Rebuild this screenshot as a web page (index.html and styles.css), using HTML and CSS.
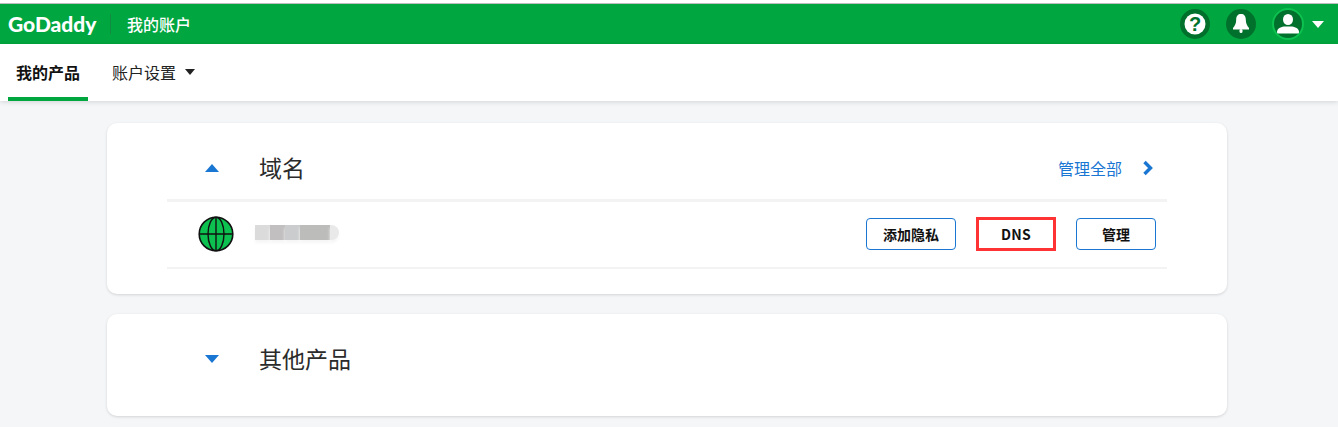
FILE: index.html
```html
<!DOCTYPE html>
<html lang="zh-CN">
<head>
  <meta charset="UTF-8">
  <title>我的账户</title>
  <link rel="stylesheet" href="styles.css">
</head>
<body>
  <header class="topbar">
    <div class="brand">
      <span class="logo">GoDaddy</span>
      <span class="brand-title">我的账户</span>
    </div>
    <div class="top-icons">
      <span class="round-icon">
        <svg width="22" height="22" viewBox="0 0 22 22"><circle cx="11" cy="11" r="10.500" fill="#fff"/><text x="11" y="17.500" class="help-mark">?</text></svg>
      </span>
      <span class="round-icon">
        <svg width="20" height="24" viewBox="0 0 20 24"><path d="M10 2C7 2 5.200 4 5.200 7.500c0 4-1.200 6-3.200 8.500v1.500h16V16c-2-2.500-3.200-4.500-3.200-8.500C14.800 4 13 2 10 2z" fill="#fff"/><rect x="8.500" y="17" width="3" height="4" rx="1.500" fill="#fff"/></svg>
      </span>
      <span class="round-icon avatar">
        <svg width="24" height="20" viewBox="0 0 24 20"><ellipse cx="12" cy="5.500" rx="5" ry="5.500" fill="#fff"/><path d="M1 18c0-3 3-5 7-5.500h8c4 .5 7 2.500 7 5.500 0 1-.5 1.500-1.500 1.500h-19C1.500 19.500 1 19 1 18z" fill="#fff"/></svg>
      </span>
      <span class="caret-white"></span>
    </div>
  </header>

  <nav class="subnav">
    <a class="tab active">我的产品</a>
    <a class="tab">账户设置<span class="caret-dark"></span></a>
  </nav>

  <main class="content">
    <section class="card">
      <div class="card-head">
        <span class="arrow-up"></span>
        <h2 class="card-title">域名</h2>
        <a class="manage-all">管理全部
          <svg width="12" height="16" viewBox="0 0 12 16"><path d="M2.500 2 8.500 8 2.500 14" fill="none" stroke="#1976d2" stroke-width="3.400"/></svg>
        </a>
      </div>
      <div class="domain-row">
        <svg class="globe" width="36" height="36" viewBox="0 0 36 36">
          <circle cx="18" cy="18" r="16.800" fill="#0cc14f" stroke="#111" stroke-width="1.600"/>
          <ellipse cx="18" cy="18" rx="8" ry="16.800" fill="none" stroke="#111" stroke-width="1.400"/>
          <path d="M18 1v34M1 18h34" stroke="#111" stroke-width="1.400"/>
        </svg>
        <div class="blurred">
          <span class="blur-a"></span><span class="blur-b"></span><span class="blur-c"></span><span class="blur-d"></span><span class="blur-e"></span>
        </div>
        <div class="actions">
          <button class="btn">添加隐私</button>
          <button class="btn btn-marked">DNS</button>
          <button class="btn btn-short">管理</button>
        </div>
      </div>
    </section>

    <section class="card card-other">
      <div class="card-head">
        <span class="arrow-down"></span>
        <h2 class="card-title">其他产品</h2>
      </div>
    </section>
  </main>
</body>
</html>
```

FILE: styles.css
```css
* {
  box-sizing: border-box;
}
html, body {
  height: 100%;
}
body {
  margin: 0;
  overflow: hidden;
  background: #f5f6f8;
  font-family: "Noto Sans CJK SC", "Liberation Sans", sans-serif;
  color: #111;
}

.topbar {
  height: 44px;
  padding-top: 1px;
  border-top: 3px solid #fff;
  background: #00a63f;
  display: flex;
  align-items: center;
  justify-content: space-between;
  box-shadow: inset 0 1px 0 #bdbdbd;
}
.brand {
  display: flex;
  align-items: center;
  padding-left: 8px;
}
.logo {
  width: 103px;
  height: 20px;
  border-right: 1px solid #118a42;
  color: #fff;
  font-family: "Lato", sans-serif;
  font-weight: 900;
  font-size: 21px;
  line-height: 20px;
}
.brand-title {
  margin-left: 16px;
  color: #fff;
  font-size: 16px;
  font-weight: 500;
  line-height: 22px;
}
.top-icons {
  display: flex;
  align-items: center;
  padding-right: 14px;
}
.round-icon {
  width: 30px;
  height: 30px;
  margin-right: 16px;
  border-radius: 50%;
  background: #00712c;
  display: flex;
  align-items: center;
  justify-content: center;
}
.help-mark {
  fill: #00712c;
  font-family: "Liberation Sans", sans-serif;
  font-size: 20px;
  font-weight: 700;
  text-anchor: middle;
}
.avatar {
  width: 32px;
  height: 32px;
  margin-right: 8px;
  border: 2px solid #0cc14f;
}
.caret-white {
  width: 0;
  height: 0;
  border-left: 6px solid transparent;
  border-right: 6px solid transparent;
  border-top: 7px solid #fff;
}

.subnav {
  height: 57px;
  padding-left: 8px;
  background: #fff;
  display: flex;
  box-shadow: 0 1px 5px rgba(0, 0, 0, 0.14);
}
.tab {
  height: 57px;
  padding: 2px 8px 4px;
  margin-right: 16px;
  display: flex;
  align-items: center;
  font-size: 16px;
  color: #222;
}
.tab.active {
  width: 80px;
  font-weight: 700;
  color: #111;
  border-bottom: 4px solid #00a63f;
  padding-bottom: 0;
}
.caret-dark {
  margin-left: 9px;
  border-left: 5.500px solid transparent;
  border-right: 5.500px solid transparent;
  border-top: 6px solid #222;
}

.content {
  width: 1120px;
  margin-left: 107px;
  padding-top: 22px;
}
.card {
  height: 171px;
  padding: 0 60px;
  background: #fff;
  border-radius: 10px;
  box-shadow: 0 1px 3px rgba(0, 0, 0, 0.14);
}
.card-other {
  height: 102px;
  margin-top: 20px;
}
.card-head {
  height: 79px;
  padding-top: 14px;
  display: flex;
  align-items: center;
  border-bottom: 3px solid #f3f3f3;
}
.card-other .card-head {
  border-bottom: 0;
  padding-top: 0;
  height: 90px;
}
.arrow-up, .arrow-down {
  width: 0;
  height: 0;
  margin-left: 38px;
  border-left: 7px solid transparent;
  border-right: 7px solid transparent;
}
.arrow-up {
  border-bottom: 8px solid #1976d2;
}
.arrow-down {
  border-top: 8px solid #1976d2;
}
.card-title {
  margin: 0 0 2px 40px;
  font-size: 23px;
  font-weight: 400;
  color: #2b2b2b;
}
.manage-all {
  margin-left: auto;
  margin-right: 13px;
  display: flex;
  align-items: center;
  gap: 20px;
  color: #1976d2;
  font-size: 16px;
}
.domain-row {
  height: 67px;
  display: flex;
  align-items: center;
  border-bottom: 2px solid #f3f3f3;
}
.globe {
  margin-left: 31px;
  margin-bottom: 1px;
}
.blurred {
  margin-left: 21px;
  margin-bottom: 4px;
  display: flex;
  height: 15px;
}
.blurred span {
  height: 15px;
  box-shadow: 0 3px 3px #f6f6f6;
}
.blur-a {
  width: 15px;
  background: #dbdbdb;
}
.blur-b {
  width: 15px;
  background: #c1bfbf;
}
.blur-c {
  width: 15px;
  background: #cbcccd;
}
.blur-d {
  width: 30px;
  background: #bcbcba;
}
.blur-e {
  width: 9px;
  background: #e9e9e9;
  border-radius: 0 8px 8px 0;
}
.actions {
  margin-left: auto;
  margin-right: 11px;
  margin-bottom: 2px;
  display: flex;
  gap: 20px;
  align-items: center;
}
.btn {
  width: 90px;
  height: 32px;
  padding: 0;
  background: #fff;
  border: 1px solid #1976d2;
  border-radius: 4px;
  color: #111;
  font-family: inherit;
  font-size: 14px;
  font-weight: 700;
}
.btn-short {
  width: 80px;
}
.btn-marked {
  width: 80px;
  height: 34px;
  border: 3px solid #f33;
  border-radius: 0;
  font-size: 14px;
  letter-spacing: 0.2px;
}
```
